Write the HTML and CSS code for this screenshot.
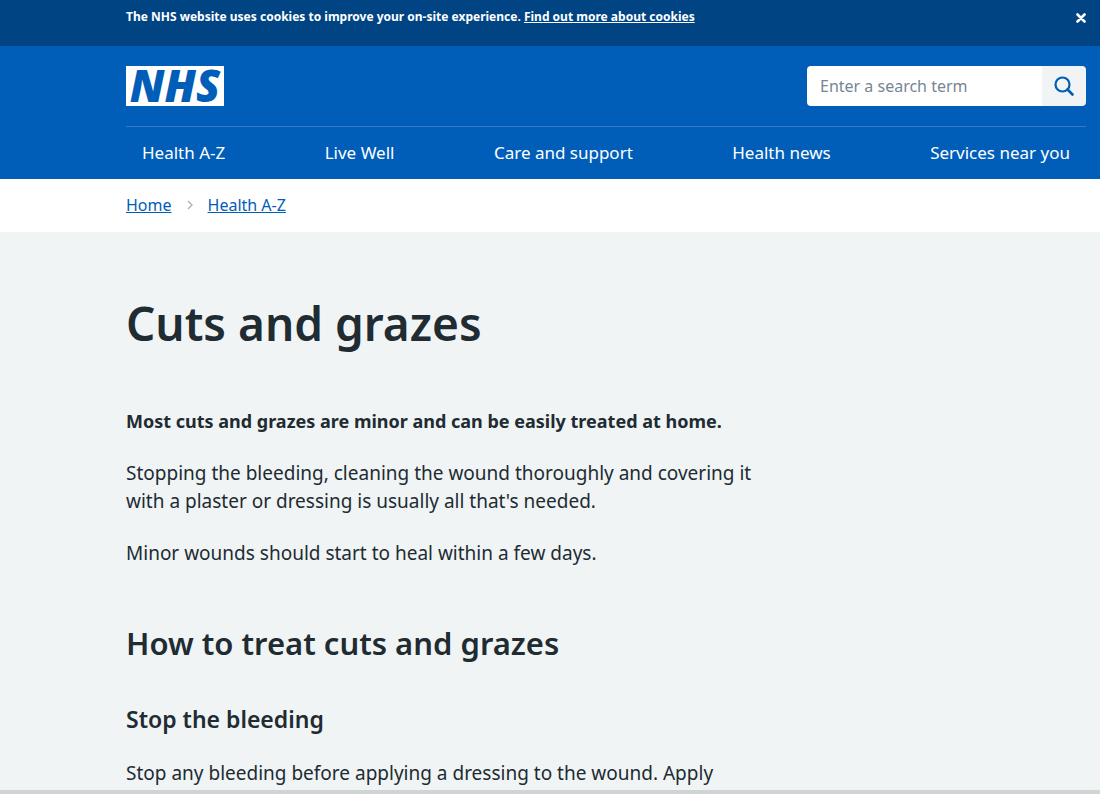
FILE: index.html
```
<!DOCTYPE html>
<html lang="en">
<head>
    <meta charset="UTF-8">
    <meta name="viewport" content="width=device-width, initial-scale=1.0">
    <title>Cuts and grazes - NHS</title>
    <link rel="stylesheet" href="styles.css">
</head>
<body>
    <div class="cookie-banner">
        <div class="container cookie-inner">
            <p>The NHS website uses cookies to improve your on-site experience. <a href="#">Find out more about cookies</a></p>
            <button type="button" class="cookie-close" aria-label="Close">
                <svg width="10" height="10" viewBox="0 0 10 10"><path d="M1.500 1.500l7 7M8.500 1.500l-7 7" stroke="#fff" stroke-width="2.600" stroke-linecap="round"/></svg>
            </button>
        </div>
    </div>

    <header class="header">
        <div class="container header-top">
            <a href="#" class="logo">NHS</a>
            <form class="search">
                <input type="search" class="search-input" placeholder="Enter a search term" aria-label="Enter a search term">
                <button type="button" class="search-button" aria-label="Search">
                    <svg width="20" height="20" viewBox="0 0 20 20" fill="none" stroke="#005eb8"><circle cx="8.500" cy="8.500" r="7" stroke-width="2.200"/><path d="M13.500 13.500l5 5" stroke-width="2.600" stroke-linecap="round"/></svg>
                </button>
            </form>
        </div>
        <nav class="container nav">
            <ul>
                <li><a href="#">Health A-Z</a></li>
                <li><a href="#">Live Well</a></li>
                <li><a href="#">Care and support</a></li>
                <li><a href="#">Health news</a></li>
                <li><a href="#">Services near you</a></li>
            </ul>
        </nav>
    </header>

    <nav class="breadcrumb" aria-label="Breadcrumb">
        <ol class="container">
            <li><a href="#">Home</a></li>
            <li>
                <svg width="6" height="10" viewBox="0 0 6 10" fill="none"><path d="M1 1l4 4-4 4" stroke="#aeb7bd" stroke-width="1.500"/></svg>
                <a href="#">Health A-Z</a>
            </li>
        </ol>
    </nav>

    <main class="main">
        <article class="container">
            <div class="content">
                <h1>Cuts and grazes</h1>
                <p class="intro">Most cuts and grazes are minor and can be easily treated at home.</p>
                <p>Stopping the bleeding, cleaning the wound thoroughly and covering it with a plaster or dressing is usually all that's needed.</p>
                <p>Minor wounds should start to heal within a few days.</p>
                <h2>How to treat cuts and grazes</h2>
                <h3>Stop the bleeding</h3>
                <p>Stop any bleeding before applying a dressing to the wound. Apply</p>
            </div>
        </article>
    </main>
</body>
</html>
```
FILE: styles.css
```
* {
    box-sizing: border-box;
}

body {
    margin: 0;
    height: calc(100vh - 3px);
    display: flex;
    flex-direction: column;
    overflow: hidden;
    font-family: "Noto Sans", "Open Sans", sans-serif;
    font-size: 19px;
    line-height: 28px;
    color: #212b32;
    background-color: #fff;
}

ul,
ol {
    list-style: none;
    margin: 0;
    padding: 0;
}

.container {
    max-width: 960px;
    margin: 0 14px 0 126px;
}

/* Cookie banner */
.cookie-banner {
    background-color: #004484;
    color: #fff;
    height: 46px;
    flex: none;
}

.cookie-inner {
    display: flex;
    justify-content: space-between;
    align-items: flex-start;
    padding-top: 8px;
}

.cookie-banner p {
    margin: 0;
    font-size: 12px;
    line-height: 18px;
    font-weight: 700;
}

.cookie-banner a {
    color: #fff;
}

.cookie-close {
    display: flex;
    padding: 5px 0;
    border: 0;
    background: none;
    cursor: pointer;
}

/* Header */
.header {
    background-color: #005eb8;
    flex: none;
}

.header-top {
    display: flex;
    justify-content: space-between;
    padding: 20px 0;
}

.logo {
    width: 98px;
    height: 40px;
    font-family: "Open Sans", sans-serif;
    font-size: 44px;
    line-height: 38px;
    font-weight: 800;
    font-style: italic;
    text-align: center;
    text-decoration: none;
    color: #005eb8;
    background-color: #fff;
}

.search {
    display: flex;
    width: 279px;
    height: 40px;
    border-radius: 4px;
    overflow: hidden;
}

.search-input {
    flex: 1;
    min-width: 0;
    border: 0;
    padding: 0 13px;
    font-family: inherit;
    font-size: 16px;
    background-color: #fff;
}

.search-input::placeholder {
    color: #768692;
}

.search-button {
    width: 44px;
    padding: 0;
    border: 0;
    display: flex;
    align-items: center;
    justify-content: center;
    background-color: #f0f4f5;
    cursor: pointer;
}

.nav {
    border-top: 1px solid #337ec6;
}

.nav ul {
    display: flex;
    justify-content: space-between;
    padding: 12px 16px;
}

.nav a {
    display: block;
    color: #fff;
    font-size: 17px;
    text-decoration: none;
}

.nav a:hover {
    text-decoration: underline;
}

/* Breadcrumb */
.breadcrumb {
    flex: none;
    font-size: 16px;
}

.breadcrumb ol {
    display: flex;
    gap: 15px;
    padding: 12px 0 13px;
}

.breadcrumb li {
    display: flex;
    align-items: center;
    gap: 15px;
}

.breadcrumb a {
    color: #005eb8;
}

/* Content */
.main {
    flex: 1;
    min-height: 0;
    overflow: hidden;
    background-color: #f0f4f5;
    border-bottom: 4px solid #cfd4d5;
}

.content {
    max-width: 640px;
    padding-top: 63px;
}

.content p {
    margin: 0 0 24px;
}

.content .intro {
    font-size: 18px;
    font-weight: 700;
}

h1,
h2,
h3 {
    font-weight: 600;
}

h1 {
    margin: 0 0 56px;
    font-size: 46px;
    line-height: 56px;
}

h2 {
    margin: 56px 0 40px;
    font-size: 31px;
    line-height: 40px;
}

h3 {
    margin: 0 0 24px;
    font-size: 23px;
    line-height: 32px;
}
```
